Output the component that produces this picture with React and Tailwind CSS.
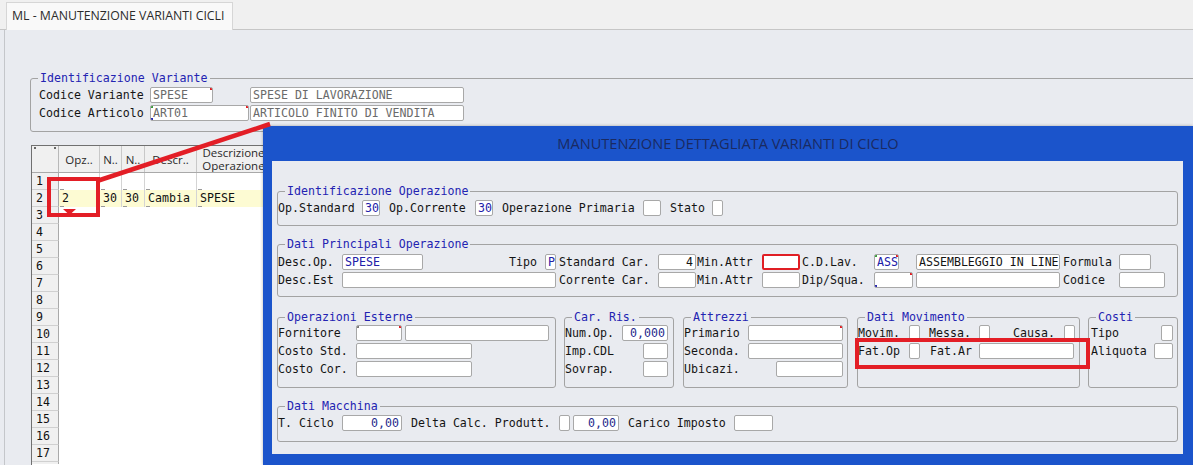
import React from "react";
import clsx from "clsx";
import { X } from "lucide-react";

const mono = "font-['DejaVu_Sans_Mono',monospace] text-[11.6px]";

function Dot({ pos, color }) {
  return <span className={clsx("absolute w-[2px] h-[2px]", pos, color)} />;
}

function Box({ className, children }) {
  return (
    <div
      className={clsx(
        "relative shrink-0 h-[16px] bg-white border border-[#a8a8a8] rounded-[2px] leading-[14px] px-[2px] overflow-hidden whitespace-nowrap",
        className
      )}
    >
      {children}
    </div>
  );
}

function Lbl({ className, children }) {
  return (
    <span className={clsx("shrink-0 whitespace-nowrap leading-[18px] text-[#141414]", className)}>
      {children}
    </span>
  );
}

function Row({ children }) {
  return <div className="flex items-center h-[18px]">{children}</div>;
}

function Group({ title, className, children }) {
  return (
    <fieldset className={clsx("border border-[#a3a3a3] rounded-[3px] min-w-0 shrink-0", className)}>
      <legend className="ml-[7px] px-[2px] leading-[12px] text-[#2323b2]">{title}</legend>
      {children}
    </fieldset>
  );
}

const cols = [
  { w: "w-[41px]", h: ["Opz.."], v: "2" },
  { w: "w-[22px]", h: ["N.."], v: "30" },
  { w: "w-[23px]", h: ["N.."], v: "30" },
  { w: "w-[52px]", h: ["Descr.."], v: "Cambia" },
  { w: "w-[74px]", h: ["Descrizione", "Operazione"], v: "SPESE" },
];

function Grid() {
  const rows = Array.from({ length: 17 }, (_, i) => i + 1);
  return (
    <div className="ml-[1px] w-[320px] h-[330px] border-t border-l border-[#707070] bg-white">
      <div className="flex h-[27px] bg-[#f0f0f0] border-b border-[#a9a9a9] font-['Open_Sans',sans-serif] text-[11.5px] text-[#2a2a2a]">
        <div className="relative w-[27px] shrink-0 border-r border-[#b8b8b8]">
          <Dot pos="left-[2px] top-[1px]" color="bg-[#666]" />
          <Dot pos="right-[2px] top-[1px]" color="bg-[#666]" />
        </div>
        {cols.map((c, i) => (
          <div
            key={i}
            className={clsx(
              "shrink-0 flex flex-col items-center justify-center leading-[13px] border-r border-[#c8c8c8] whitespace-nowrap overflow-hidden",
              c.w
            )}
          >
            {c.h.map((t) => (
              <span key={t}>{t}</span>
            ))}
          </div>
        ))}
      </div>
      {rows.map((r) => (
        <div key={r} className={clsx("flex h-[17px]", mono)}>
          <div className="w-[27px] shrink-0 bg-[#f0f0f0] border-r border-b border-r-[#a9a9a9] border-b-[#d0d0d0] pl-[4px] leading-[16px] text-[#111]">
            {r}
          </div>
          {r <= 2 &&
            cols.map((c, i) => (
              <div
                key={i}
                className={clsx(
                  "relative shrink-0 border-r border-[#d4d4d4] leading-[17px] pl-[3px] text-[#111] whitespace-nowrap overflow-hidden",
                  c.w,
                  r === 2 ? "bg-[#fdfbd3]" : "bg-white"
                )}
              >
                {r === 2 ? c.v : ""}
                <span className="absolute left-[1px] bottom-0 w-[4px] h-px bg-[#9a9a9a]" />
              </div>
            ))}
          {r <= 2 && <div className={clsx("flex-1", r === 2 ? "bg-[#fdfbd3]" : "bg-white")} />}
        </div>
      ))}
      <div className="w-[27px] h-[2px] bg-[#f0f0f0] border-r border-[#a9a9a9]" />
    </div>
  );
}

function Dialog() {
  return (
    <div className="absolute left-[263px] top-[126px] w-[930px] h-[339px] bg-[#1b54cb] shadow-[0_0_3px_rgba(0,0,0,0.3)]">
      <div className="h-[35px] flex items-center justify-center font-['Open_Sans',sans-serif] text-[14.6px] text-[#1a2a62]">
        MANUTENZIONE DETTAGLIATA VARIANTI DI CICLO
      </div>
      <div className={clsx("ml-[9px] w-[911px] h-[293px] bg-[#e9ebf0] px-[5px] pt-[24px]", mono)}>
        <Group title="Identificazione Operazione" className="w-[901px] pt-[2px] pb-[8px]">
          <Row>
            <Lbl className="w-[84px]">Op.Standard</Lbl>
            <Box className="w-[18px] text-[#2020a8]">30</Box>
            <Lbl className="w-[95px] pl-[9px]">Op.Corrente</Lbl>
            <Box className="w-[18px] text-[#2020a8]">30</Box>
            <Lbl className="w-[150px] pl-[9px]">Operazione Primaria</Lbl>
            <Box className="w-[18px]" />
            <Lbl className="w-[51px] pl-[9px]">Stato</Lbl>
            <Box className="w-[11px]" />
          </Row>
        </Group>

        <Group title="Dati Principali Operazione" className="w-[901px] mt-[12px] pt-[3px] pb-[7px]">
          <Row>
            <Lbl className="w-[64px]">Desc.Op.</Lbl>
            <Box className="w-[81px] text-[#2020a8]">SPESE</Box>
            <Lbl className="w-[122px] pl-[86px]">Tipo</Lbl>
            <Box className="w-[11px] px-[1px] text-[#2020a8]">P</Box>
            <Lbl className="w-[102px] pl-[3px]">Standard Car.</Lbl>
            <Box className="w-[38px] text-right text-[#141414]">4</Box>
            <Lbl className="w-[66px] pl-[1px]">Min.Attr</Lbl>
            <Box className="w-[38px] h-[16px] border-2 border-[#e01e24] rounded-[1px]" />
            <Lbl className="w-[74px] pl-[2px]">C.D.Lav.</Lbl>
            <Box className="w-[25px] px-[1px] text-[#2020a8]">
              ASS
              <Dot pos="left-0 top-0" color="bg-[#3a9a3a]" />
              <Dot pos="right-0 top-0" color="bg-[#e01e24]" />
            </Box>
            <span className="w-[17px] shrink-0" />
            <Box className="w-[144px] text-[#141414]">ASSEMBLEGGIO IN LINE</Box>
            <Lbl className="w-[59px] pl-[3px]">Formula</Lbl>
            <Box className="w-[32px]" />
          </Row>
          <Row>
            <Lbl className="w-[64px]">Desc.Est</Lbl>
            <Box className="w-[214px]" />
            <Lbl className="w-[102px] pl-[3px]">Corrente Car.</Lbl>
            <Box className="w-[38px]" />
            <Lbl className="w-[66px] pl-[1px]">Min.Attr</Lbl>
            <Box className="w-[38px]" />
            <Lbl className="w-[74px] pl-[2px]">Dip/Squa.</Lbl>
            <Box className="w-[39px]">
              <Dot pos="right-0 top-0" color="bg-[#e01e24]" />
              <Dot pos="left-0 bottom-0" color="bg-[#2a2ab0]" />
            </Box>
            <span className="w-[3px] shrink-0" />
            <Box className="w-[144px]" />
            <Lbl className="w-[59px] pl-[3px]">Codice</Lbl>
            <Box className="w-[46px]" />
          </Row>
        </Group>

        <div className="flex mt-[14px]">
          <Group title="Operazioni Esterne" className="w-[279px] h-[77px] pt-px">
            <Row>
              <Lbl className="w-[78px]">Fornitore</Lbl>
              <Box className="w-[46px]">
                <Dot pos="left-0 top-0" color="bg-[#777]" />
                <Dot pos="right-0 top-0" color="bg-[#e01e24]" />
              </Box>
              <span className="w-[3px] shrink-0" />
              <Box className="w-[144px]" />
            </Row>
            <Row>
              <Lbl className="w-[78px]">Costo Std.</Lbl>
              <Box className="w-[116px]" />
            </Row>
            <Row>
              <Lbl className="w-[78px]">Costo Cor.</Lbl>
              <Box className="w-[116px]" />
            </Row>
          </Group>

          <Group title="Car. Ris." className="w-[110px] h-[77px] ml-[8px] pt-px">
            <Row>
              <Lbl className="w-[57px]">Num.Op.</Lbl>
              <Box className="w-[46px] text-right text-[#1e2a8c]">0,000</Box>
            </Row>
            <Row>
              <Lbl className="w-[78px]">Imp.CDL</Lbl>
              <Box className="w-[25px]" />
            </Row>
            <Row>
              <Lbl className="w-[78px]">Sovrap.</Lbl>
              <Box className="w-[25px]" />
            </Row>
          </Group>

          <Group title="Attrezzi" className="w-[165px] h-[77px] ml-[9px] pt-px">
            <Row>
              <Lbl className="w-[64px]">Primario</Lbl>
              <Box className="w-[95px]">
                <Dot pos="right-0 top-0" color="bg-[#e01e24]" />
              </Box>
            </Row>
            <Row>
              <Lbl className="w-[64px]">Seconda.</Lbl>
              <Box className="w-[95px]" />
            </Row>
            <Row>
              <Lbl className="w-[92px]">Ubicazi.</Lbl>
              <Box className="w-[67px]" />
            </Row>
          </Group>

          <Group title="Dati Movimento" className="w-[223px] h-[77px] ml-[9px] pt-px">
            <Row>
              <Lbl className="w-[51px]">Movim.</Lbl>
              <Box className="w-[11px]" />
              <Lbl className="w-[59px] pl-[9px]">Messa.</Lbl>
              <Box className="w-[11px]" />
              <Lbl className="w-[74px] pl-[23px]">Causa.</Lbl>
              <Box className="w-[11px]" />
            </Row>
            <Row>
              <Lbl className="w-[51px]">Fat.Op</Lbl>
              <Box className="w-[11px]" />
              <Lbl className="w-[59px] pl-[10px]">Fat.Ar</Lbl>
              <Box className="w-[95px]" />
            </Row>
          </Group>

          <Group title="Costi" className="w-[90px] h-[77px] ml-[8px] pt-px">
            <Row>
              <Lbl className="w-[72px] pl-[2px]">Tipo</Lbl>
              <Box className="w-[12px]" />
            </Row>
            <Row>
              <Lbl className="w-[65px] pl-[2px]">Aliquota</Lbl>
              <Box className="w-[19px]" />
            </Row>
          </Group>
        </div>

        <Group title="Dati Macchina" className="w-[901px] mt-[12px] pt-[2px] pb-[9px]">
          <Row>
            <Lbl className="w-[64px]">T. Ciclo</Lbl>
            <Box className="w-[60px] text-right text-[#1e2a8c]">0,00</Box>
            <Lbl className="w-[157px] pl-[9px]">Delta Calc. Produtt.</Lbl>
            <Box className="w-[11px]" />
            <span className="w-[3px] shrink-0" />
            <Box className="w-[46px] text-right text-[#1e2a8c]">0,00</Box>
            <Lbl className="w-[115px] pl-[9px]">Carico Imposto</Lbl>
            <Box className="w-[39px]" />
          </Row>
        </Group>
      </div>
    </div>
  );
}

export default function App() {
  return (
    <div className="relative w-[1193px] h-[465px] overflow-hidden bg-[#e9ebf0]">
      <div className="flex items-end h-[30px] bg-[#f0f0f0] border-b border-[#c6c6c6] pl-[6px]">
        <div className="-mb-px flex items-center w-[227px] h-[28px] bg-[#f9f9f9] border border-b-0 border-[#d6d6d6] pl-[5px] font-['Open_Sans',sans-serif] text-[12.3px] text-[#2b2b2b]">
          <span className="whitespace-nowrap">ML - MANUTENZIONE VARIANTI CICLI</span>
          <X size={11} strokeWidth={1.4} className="ml-auto mr-[8px] text-[#555]" />
        </div>
      </div>

      <div className="ml-[4px] h-[435px] border-l border-[#c4c6ca] pl-[25px] pt-[42px]">
        <fieldset className={clsx("w-[1250px] border border-[#a3a3a3] rounded-[3px] pl-[8px] pt-[2px] pb-[9px]", mono)}>
          <legend className="ml-[-1px] px-[2px] leading-[12px] text-[#2323b2]">Identificazione Variante</legend>
          <Row>
            <Lbl className="w-[111px]">Codice Variante</Lbl>
            <Box className="w-[63px] text-[#6a6a6a]">
              SPESE
              <Dot pos="right-0 top-0" color="bg-[#e01e24]" />
            </Box>
            <span className="w-[37px] shrink-0" />
            <Box className="w-[214px] text-[#6a6a6a]">SPESE DI LAVORAZIONE</Box>
          </Row>
          <Row>
            <Lbl className="w-[111px]">Codice Articolo</Lbl>
            <Box className="w-[99px] text-[#6a6a6a]">
              ART01
              <Dot pos="left-0 top-0" color="bg-[#3a9a3a]" />
              <Dot pos="right-0 top-0" color="bg-[#e01e24]" />
              <Dot pos="left-0 bottom-0" color="bg-[#2a2ab0]" />
            </Box>
            <span className="w-[1px] shrink-0" />
            <Box className="w-[214px] text-[#6a6a6a]">ARTICOLO FINITO DI VENDITA</Box>
          </Row>
        </fieldset>

        <div className="mt-[13px]">
          <Grid />
        </div>
      </div>

      <Dialog />

      <div className="absolute left-[47px] top-[177px] w-[53px] h-[40px] border-4 border-[#e31e26]" />
      <div className="absolute left-[855px] top-[338px] w-[235px] h-[31px] border-4 border-[#e31e26]" />
      <svg className="absolute left-0 top-0 pointer-events-none" width="1193" height="465">
        <line x1="97" y1="181" x2="270" y2="124" stroke="#e31e26" strokeWidth="4.5" />
        <polygon points="63,209 76,209 69.5,215" fill="#e31e26" />
      </svg>
    </div>
  );
}
